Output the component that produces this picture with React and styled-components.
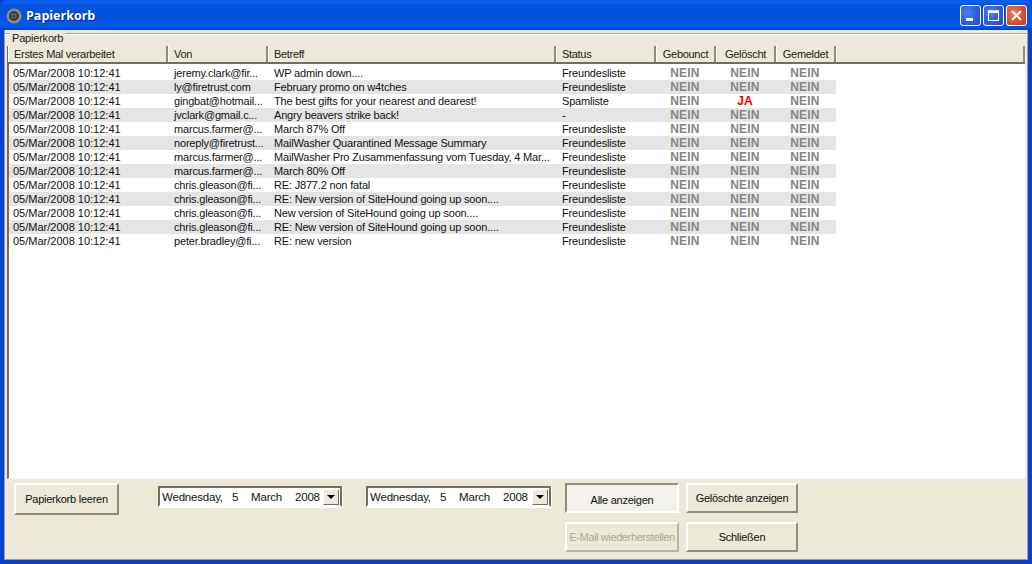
import React from 'react';
import styled, { createGlobalStyle } from 'styled-components';

const GlobalStyle = createGlobalStyle`
  html, body {
    margin: 0;
    padding: 0;
    background: #0a3fd0;
  }
  body {
    font-family: "Liberation Sans", Arial, sans-serif;
    font-size: 11px;
    color: #000;
  }
`;

const columns = [
  { title: 'Erstes Mal verarbeitet', width: 160 },
  { title: 'Von', width: 100 },
  { title: 'Betreff', width: 288 },
  { title: 'Status', width: 100 },
  { title: 'Gebounct', width: 60, center: true },
  { title: 'Gelöscht', width: 60, center: true },
  { title: 'Gemeldet', width: 60, center: true }
];

const stamp = '05/Mar/2008 10:12:41';

const mails = [
  ['jeremy.clark@fir...', 'WP admin down....', 'Freundesliste'],
  ['ly@firetrust.com', 'February promo on w4tches', 'Freundesliste'],
  ['gingbat@hotmail...', 'The best gifts for your nearest and dearest!', 'Spamliste', true],
  ['jvclark@gmail.c...', 'Angry beavers strike back!', '-'],
  ['marcus.farmer@...', 'March 87% Off', 'Freundesliste'],
  ['noreply@firetrust...', 'MailWasher Quarantined Message Summary', 'Freundesliste'],
  ['marcus.farmer@...', 'MailWasher Pro Zusammenfassung vom Tuesday, 4 Mar...', 'Freundesliste'],
  ['marcus.farmer@...', 'March 80% Off', 'Freundesliste'],
  ['chris.gleason@fi...', 'RE: J877.2 non fatal', 'Freundesliste'],
  ['chris.gleason@fi...', 'RE: New version of SiteHound going up soon....', 'Freundesliste'],
  ['chris.gleason@fi...', 'New version of SiteHound going up soon....', 'Freundesliste'],
  ['chris.gleason@fi...', 'RE: New version of SiteHound going up soon....', 'Freundesliste'],
  ['peter.bradley@fi...', 'RE: new version', 'Freundesliste']
];

const Window = styled.div`
  width: 1032px;
  height: 564px;
  display: flex;
  flex-direction: column;
  overflow: hidden;
  background: #0a3fd0;
`;

const TitleBar = styled.div`
  height: 30px;
  flex: none;
  box-sizing: border-box;
  display: flex;
  align-items: center;
  padding: 1px 5px 0 6px;
  border-radius: 7px 7px 0 0;
  background: linear-gradient(180deg, #0a5ae6 0%, #0a62f0 6%, #0454e0 14%, #0350dc 50%, #0358ea 80%, #0454e4 90%, #0340c4 100%);
`;

const TitleIcon = styled.svg`
  width: 16px;
  height: 16px;
  flex: none;
`;

const TitleText = styled.span`
  margin-left: 4px;
  flex: 1;
  font-family: "Open Sans", "Liberation Sans", sans-serif;
  font-size: 12.5px;
  font-weight: 700;
  color: #fff;
  text-shadow: 1px 1px 1px #0a2a90;
`;

const CaptionButtons = styled.div`
  display: flex;
  gap: 2px;
`;

const CaptionButton = styled.div`
  width: 21px;
  height: 21px;
  box-sizing: border-box;
  border: 1px solid #fff;
  border-radius: 3px;
  display: flex;
  align-items: center;
  justify-content: center;
  background: ${(props) => props.$close
    ? 'radial-gradient(circle at 35% 35%, #e8806a 0%, #d9512c 55%, #c23a18 100%)'
    : 'radial-gradient(circle at 35% 35%, #4f7cf0 0%, #2f5fe0 55%, #2448c8 100%)'};
`;

const Body = styled.div`
  flex: 1;
  min-height: 0;
  margin: 0 4px 4px;
  background: #ece9d8;
  display: flex;
  flex-direction: column;
  border-right: 1px solid #a0a0a0;
  border-bottom: 1px solid #a0a0a0;
  border-left: 1px solid #a0a0a0;
  box-sizing: border-box;
`;

const Group = styled.div`
  flex: 1;
  min-height: 0;
  display: flex;
  flex-direction: column;
  position: relative;
  margin-top: 3px;
  border-top: 1px solid #a7a698;
  box-shadow: inset 0 1px 0 #fff;
  padding: 12px 1px 0 2px;
`;

const GroupLabel = styled.span`
  position: absolute;
  left: 5px;
  top: -3px;
  padding: 0 2px;
  line-height: 14px;
  letter-spacing: -0.2px;
  background: #ece9d8;
  color: #222;
`;

const List = styled.div`
  flex: 1;
  min-height: 0;
  background: #fff;
  border-left: 2px solid #716f64;
  border-right: 1px solid #f5f4ec;
  border-bottom: 1px solid #f5f4ec;
  display: flex;
  flex-direction: column;
`;

const HeaderRow = styled.div`
  display: flex;
  height: 18px;
  flex: none;
  background: #ece9d8;
  box-sizing: border-box;
  border-bottom: 2px solid #716f64;
  margin-left: -1px;
  margin-bottom: 2px;
`;

const HeaderCell = styled.div`
  width: ${(props) => props.$w}px;
  flex: ${(props) => (props.$fill ? 1 : 'none')};
  box-sizing: border-box;
  border-left: 1px solid #fff;
  border-right: 2px solid #8f8d80;
  line-height: 17px;
  padding-left: ${(props) => (props.$center ? 0 : 5)}px;
  text-align: ${(props) => (props.$center ? 'center' : 'left')};
  letter-spacing: -0.3px;
  color: #222;
  white-space: nowrap;
  overflow: hidden;
`;

const Row = styled.div`
  display: flex;
  width: 827px;
  height: 14px;
  line-height: 14px;
  flex: none;
  background: ${(props) => (props.$alt ? '#e5e5e5' : '#fff')};
`;

const Cell = styled.div`
  box-sizing: border-box;
  white-space: nowrap;
  flex: none;
  width: ${(props) => props.$w}px;
  padding-left: ${(props) => props.$pad}px;
  letter-spacing: ${(props) => (props.$tight ? '-0.18px' : '0')};
  color: #111;
`;

const Flag = styled.div`
  width: ${(props) => props.$w}px;
  flex: none;
  text-align: center;
  font-size: 12px;
  font-weight: 700;
  letter-spacing: 0.2px;
  color: ${(props) => (props.$on ? '#f00000' : '#858585')};
`;

const Footer = styled.div`
  height: 80px;
  flex: none;
  box-sizing: border-box;
  display: flex;
  padding: 4px 0 0 9px;
`;

const Button = styled.div`
  box-sizing: border-box;
  width: ${(props) => props.$w}px;
  height: ${(props) => props.$h || 30}px;
  display: flex;
  align-items: center;
  justify-content: center;
  white-space: nowrap;
  letter-spacing: ${(props) => (props.$disabled ? '-0.38px' : '-0.25px')};
  background: ${(props) => (props.$pressed ? '#f3f2ea' : '#ece9d8')};
  color: ${(props) => (props.$disabled ? '#aca899' : '#111')};
  border-style: solid;
  border-width: 2px;
  border-color: ${(props) => (props.$pressed
    ? '#8f8d80 #fff #fff #8f8d80'
    : props.$disabled
      ? '#fff #b8b6a8 #b8b6a8 #fff'
      : '#fff #8f8d80 #8f8d80 #fff')};
  padding-top: ${(props) => (props.$pressed ? 3 : 0)}px;
`;

const DateBox = styled.div`
  box-sizing: border-box;
  width: ${(props) => props.$w}px;
  height: 21px;
  margin-top: 3px;
  margin-left: ${(props) => props.$left}px;
  padding-right: 1px;
  background: #fff;
  border-style: solid;
  border-width: 2px;
  border-color: #716f64 #716f64 #fff #716f64;
  box-shadow: 1px 1px 0 #fff;
  display: flex;
  align-items: center;
  font-size: 11.5px;
  letter-spacing: -0.2px;
  color: #111;
`;

const DatePart = styled.span`
  margin-left: ${(props) => props.$gap}px;
`;

const DateDrop = styled.div`
  width: 16px;
  height: 16px;
  flex: none;
  margin-left: auto;
  box-sizing: border-box;
  background: #ece9d8;
  border: 1px solid;
  border-color: #fff #716f64 #716f64 #fff;
  display: flex;
  align-items: center;
  justify-content: center;
`;

const Arrow = styled.div`
  width: 0;
  height: 0;
  border-left: 4px solid transparent;
  border-right: 4px solid transparent;
  border-top: 4px solid #000;
`;

const ButtonGrid = styled.div`
  margin-left: 14px;
  display: grid;
  grid-template-columns: 114px 112px;
  column-gap: 7px;
  row-gap: 9px;
  align-content: start;
`;

const DatePicker = ({ w, left }) => (
  <DateBox $w={w} $left={left}>
    <DatePart $gap={2}>Wednesday,</DatePart>
    <DatePart $gap={9}>5</DatePart>
    <DatePart $gap={13}>March</DatePart>
    <DatePart $gap={13}>2008</DatePart>
    <DateDrop><Arrow /></DateDrop>
  </DateBox>
);

const App = () => (
  <Window>
    <GlobalStyle />
    <TitleBar>
      <TitleIcon viewBox="0 0 16 16">
        <circle cx="8" cy="8" r="7.5" fill="#8d8d88" />
        <circle cx="8" cy="8" r="5" fill="#3c3c3c" />
        <circle cx="6.5" cy="6.5" r="1" fill="#999" />
        <circle cx="9.5" cy="6.5" r="1" fill="#888" />
        <circle cx="6.5" cy="9.5" r="1" fill="#888" />
        <circle cx="9.5" cy="9.5" r="1" fill="#777" />
      </TitleIcon>
      <TitleText>Papierkorb</TitleText>
      <CaptionButtons>
        <CaptionButton>
          <svg width="13" height="13" viewBox="0 0 13 13"><rect x="2" y="9" width="7" height="3" fill="#fff" /></svg>
        </CaptionButton>
        <CaptionButton>
          <svg width="13" height="13" viewBox="0 0 13 13"><rect x="1.5" y="2" width="10" height="9.5" fill="none" stroke="#fff" /><rect x="1" y="1.5" width="11" height="2.5" fill="#fff" /></svg>
        </CaptionButton>
        <CaptionButton $close>
          <svg width="13" height="13" viewBox="0 0 13 13"><path d="M2 2 L11 11 M11 2 L2 11" stroke="#fff" strokeWidth="2" /></svg>
        </CaptionButton>
      </CaptionButtons>
    </TitleBar>
    <Body>
      <Group>
        <GroupLabel>Papierkorb</GroupLabel>
        <List>
          <HeaderRow>
            {columns.map((c) => (
              <HeaderCell key={c.title} $w={c.width} $center={c.center}>{c.title}</HeaderCell>
            ))}
            <HeaderCell $fill />
          </HeaderRow>
          {mails.map((m, i) => (
            <Row key={i} $alt={i % 2 === 1}>
              <Cell $w={158} $pad={4}>{stamp}</Cell>
              <Cell $w={100} $pad={7} $tight>{m[0]}</Cell>
              <Cell $w={288} $pad={7} $tight>{m[1]}</Cell>
              <Cell $w={100} $pad={7} $tight>{m[2]}</Cell>
              <Flag $w={60}>NEIN</Flag>
              <Flag $w={60} $on={m[3]}>{m[3] ? 'JA' : 'NEIN'}</Flag>
              <Flag $w={60}>NEIN</Flag>
            </Row>
          ))}
        </List>
      </Group>
      <Footer>
        <Button $w={105} $h={32}>Papierkorb leeren</Button>
        <DatePicker w={184} left={39} />
        <DatePicker w={185} left={24} />
        <ButtonGrid>
          <Button $w={114} $pressed>Alle anzeigen</Button>
          <Button $w={112}>Gelöschte anzeigen</Button>
          <Button $w={114} $disabled>E-Mail wiederherstellen</Button>
          <Button $w={112}>Schließen</Button>
        </ButtonGrid>
      </Footer>
    </Body>
  </Window>
);

export default App;
